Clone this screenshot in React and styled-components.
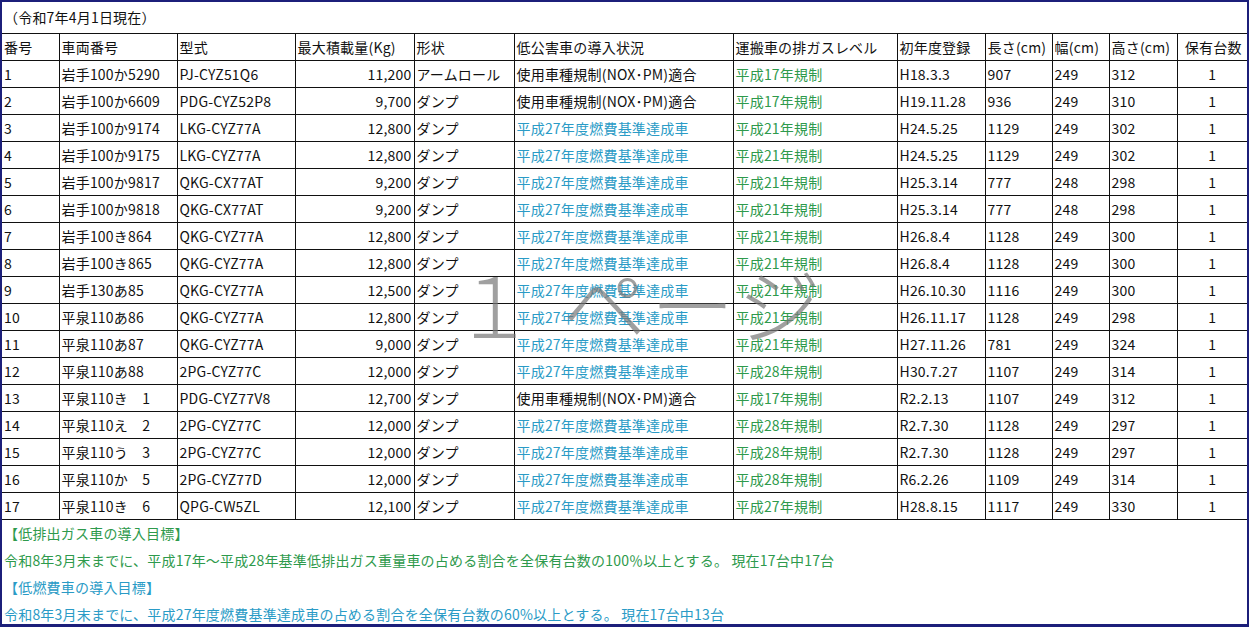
import React from "react";
import styled, { createGlobalStyle } from "styled-components";

const Global = createGlobalStyle`
  html, body { margin: 0; background: #fff; }
  body { font-family: "Noto Sans CJK JP", "Noto Sans", sans-serif; font-size: 14px; letter-spacing: 0.2px; color: #111; }
`;

const cols = [57, 118, 118, 119, 100, 219, 164, 88, 67, 57, 68, 70];
const heads = ["番号", "車両番号", "型式", "最大積載量(Kg)", "形状", "低公害車の導入状況", "運搬車の排ガスレベル", "初年度登録", "長さ(cm)", "幅(cm)", "高さ(cm)", "保有台数"];

const NOX = "使用車種規制(NOX･PM)適合";
const FUEL = "平成27年度燃費基準達成車";
const rows = [
  ["岩手100か5290", "PJ-CYZ51Q6", "11,200", "アームロール", NOX, "平成17年規制", "H18.3.3", "907", "249", "312"],
  ["岩手100か6609", "PDG-CYZ52P8", "9,700", "ダンプ", NOX, "平成17年規制", "H19.11.28", "936", "249", "310"],
  ["岩手100か9174", "LKG-CYZ77A", "12,800", "ダンプ", FUEL, "平成21年規制", "H24.5.25", "1129", "249", "302"],
  ["岩手100か9175", "LKG-CYZ77A", "12,800", "ダンプ", FUEL, "平成21年規制", "H24.5.25", "1129", "249", "302"],
  ["岩手100か9817", "QKG-CX77AT", "9,200", "ダンプ", FUEL, "平成21年規制", "H25.3.14", "777", "248", "298"],
  ["岩手100か9818", "QKG-CX77AT", "9,200", "ダンプ", FUEL, "平成21年規制", "H25.3.14", "777", "248", "298"],
  ["岩手100き864", "QKG-CYZ77A", "12,800", "ダンプ", FUEL, "平成21年規制", "H26.8.4", "1128", "249", "300"],
  ["岩手100き865", "QKG-CYZ77A", "12,800", "ダンプ", FUEL, "平成21年規制", "H26.8.4", "1128", "249", "300"],
  ["岩手130あ85", "QKG-CYZ77A", "12,500", "ダンプ", FUEL, "平成21年規制", "H26.10.30", "1116", "249", "300"],
  ["平泉110あ86", "QKG-CYZ77A", "12,800", "ダンプ", FUEL, "平成21年規制", "H26.11.17", "1128", "249", "298"],
  ["平泉110あ87", "QKG-CYZ77A", "9,000", "ダンプ", FUEL, "平成21年規制", "H27.11.26", "781", "249", "324"],
  ["平泉110あ88", "2PG-CYZ77C", "12,000", "ダンプ", FUEL, "平成28年規制", "H30.7.27", "1107", "249", "314"],
  ["平泉110き　1", "PDG-CYZ77V8", "12,700", "ダンプ", NOX, "平成17年規制", "R2.2.13", "1107", "249", "312"],
  ["平泉110え　2", "2PG-CYZ77C", "12,000", "ダンプ", FUEL, "平成28年規制", "R2.7.30", "1128", "249", "297"],
  ["平泉110う　3", "2PG-CYZ77C", "12,000", "ダンプ", FUEL, "平成28年規制", "R2.7.30", "1128", "249", "297"],
  ["平泉110か　5", "2PG-CYZ77D", "12,000", "ダンプ", FUEL, "平成28年規制", "R6.2.26", "1109", "249", "314"],
  ["平泉110き　6", "QPG-CW5ZL", "12,100", "ダンプ", FUEL, "平成27年規制", "H28.8.15", "1117", "249", "330"],
];

export default function App() {
  return (
    <>
      <Global />
      <Frame>
        <Title>（令和7年4月1日現在）</Title>
        <Table>
          <colgroup>
            {cols.map((w, i) => <col key={i} style={{ width: w }} />)}
          </colgroup>
          <thead>
            <tr>
              {heads.map((h, i) => <Th key={i}>{h}</Th>)}
            </tr>
          </thead>
          <tbody>
            {rows.map((r, i) => (
              <tr key={i}>
                <Td>{i + 1}</Td>
                <Td>{r[0]}</Td>
                <Td>{r[1]}</Td>
                <Td $align="right">{r[2]}</Td>
                <Td>{r[3]}</Td>
                <Td $tone={r[4] === FUEL ? "teal" : undefined}>{r[4]}</Td>
                <Td $tone="green">{r[5]}</Td>
                <Td>{r[6]}</Td>
                <Td>{r[7]}</Td>
                <Td>{r[8]}</Td>
                <Td>{r[9]}</Td>
                <Td $align="center">1</Td>
              </tr>
            ))}
          </tbody>
        </Table>
        <Note $tone="green">【低排出ガス車の導入目標】</Note>
        <Note $tone="green">令和8年3月末までに、平成17年～平成28年基準低排出ガス重量車の占める割合を全保有台数の100％以上とする。 現在17台中17台</Note>
        <Note $tone="teal">【低燃費車の導入目標】</Note>
        <Note $tone="teal">令和8年3月末までに、平成27年度燃費基準達成車の占める割合を全保有台数の60%以上とする。 現在17台中13台</Note>
        <Watermark>１ ページ</Watermark>
      </Frame>
    </>
  );
}

const tones = { green: "#2e9a4c", teal: "#2a9bc6" };

const Frame = styled.div`
  position: relative;
  width: 1249px;
  height: 627px;
  box-sizing: border-box;
  border: 2px solid #1c1f7a;
  border-bottom-width: 3px;
  overflow: hidden;
`;

const Title = styled.div`
  height: 31px;
  line-height: 31px;
  padding-left: 2px;
`;

const Table = styled.table`
  border-collapse: collapse;
  table-layout: fixed;
  width: 1245px;
`;

const Th = styled.th`
  height: 26px;
  padding: 0 0 0 2px;
  border: 1px solid #111;
  font-weight: normal;
  text-align: left;
  white-space: nowrap;
  overflow: hidden;
  &:first-child { border-left: 0; }
  &:last-child { border-right: 0; text-align: center; }
`;

const Td = styled.td`
  height: 26px;
  padding: 0 2px;
  border: 1px solid #111;
  white-space: nowrap;
  overflow: hidden;
  text-align: ${({ $align }) => $align || "left"};
  color: ${({ $tone }) => tones[$tone] || "#111"};
  &:first-child { border-left: 0; }
  &:last-child { border-right: 0; }
`;

const Note = styled.div`
  height: 27px;
  line-height: 27px;
  padding-left: 2px;
  color: ${({ $tone }) => tones[$tone]};
`;

const Watermark = styled.div`
  position: absolute;
  left: 450px;
  top: 258px;
  font-size: 84px;
  font-weight: 300;
  line-height: 1;
  color: rgba(120, 120, 120, 0.7);
  letter-spacing: 4px;
  pointer-events: none;
  white-space: nowrap;
`;
